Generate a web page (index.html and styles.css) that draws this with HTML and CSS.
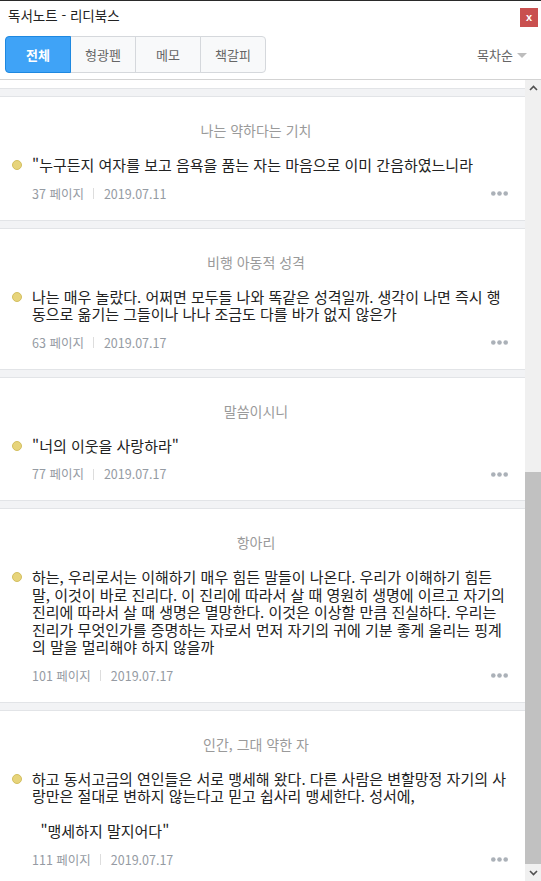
FILE: index.html
```html
<!DOCTYPE html>
<html lang="ko">
<head>
<meta charset="utf-8">
<title>독서노트 - 리디북스</title>
<link rel="stylesheet" href="styles.css">
</head>
<body>
<div class="window">
  <header class="titlebar">
    <span class="title">독서노트 - 리디북스</span>
    <button class="close">x</button>
  </header>
  <nav class="toolbar">
    <div class="tabs">
      <button class="tab active">전체</button>
      <button class="tab">형광펜</button>
      <button class="tab">메모</button>
      <button class="tab last">책갈피</button>
    </div>
    <div class="sort">
      <span>목차순</span>
      <svg class="caret" width="10" height="5" viewBox="0 0 10 5"><path d="M0 0h10L5 5z" fill="#bdbdbd"/></svg>
    </div>
  </nav>
  <main class="body">
    <div class="list">
      <div class="tail"></div>
      <div class="sep"></div>

      <article class="card">
        <h3 class="chapter">나는 약하다는 기치</h3>
        <div class="quote"><span class="dot"></span><p class="text">"누구든지 여자를 보고 음욕을 품는 자는 마음으로 이미 간음하였느니라</p></div>
        <div class="meta"><span>37 페이지</span><span class="bar"></span><span>2019.07.11</span>
          <svg class="more" width="17" height="5" viewBox="0 0 17 5"><circle cx="2.3" cy="2.5" r="2.3"/><circle cx="8.5" cy="2.5" r="2.3"/><circle cx="14.7" cy="2.5" r="2.3"/></svg></div>
      </article>
      <div class="sep"></div>

      <article class="card">
        <h3 class="chapter">비행 아동적 성격</h3>
        <div class="quote"><span class="dot"></span><p class="text">나는 매우 놀랐다. 어쩌면 모두들 나와 똑같은 성격일까. 생각이 나면 즉시 행<br>동으로 옮기는 그들이나 나나 조금도 다를 바가 없지 않은가</p></div>
        <div class="meta"><span>63 페이지</span><span class="bar"></span><span>2019.07.17</span>
          <svg class="more" width="17" height="5" viewBox="0 0 17 5"><circle cx="2.3" cy="2.5" r="2.3"/><circle cx="8.5" cy="2.5" r="2.3"/><circle cx="14.7" cy="2.5" r="2.3"/></svg></div>
      </article>
      <div class="sep"></div>

      <article class="card">
        <h3 class="chapter">말씀이시니</h3>
        <div class="quote"><span class="dot"></span><p class="text">"너의 이웃을 사랑하라"</p></div>
        <div class="meta"><span>77 페이지</span><span class="bar"></span><span>2019.07.17</span>
          <svg class="more" width="17" height="5" viewBox="0 0 17 5"><circle cx="2.3" cy="2.5" r="2.3"/><circle cx="8.5" cy="2.5" r="2.3"/><circle cx="14.7" cy="2.5" r="2.3"/></svg></div>
      </article>
      <div class="sep"></div>

      <article class="card">
        <h3 class="chapter">항아리</h3>
        <div class="quote"><span class="dot"></span><p class="text">하는, 우리로서는 이해하기 매우 힘든 말들이 나온다. 우리가 이해하기 힘든<br>말, 이것이 바로 진리다. 이 진리에 따라서 살 때 영원히 생명에 이르고 자기의<br>진리에 따라서 살 때 생명은 멸망한다. 이것은 이상할 만큼 진실하다. 우리는<br>진리가 무엇인가를 증명하는 자로서 먼저 자기의 귀에 기분 좋게 울리는 핑계<br>의 말을 멀리해야 하지 않을까</p></div>
        <div class="meta"><span>101 페이지</span><span class="bar"></span><span>2019.07.17</span>
          <svg class="more" width="17" height="5" viewBox="0 0 17 5"><circle cx="2.3" cy="2.5" r="2.3"/><circle cx="8.5" cy="2.5" r="2.3"/><circle cx="14.7" cy="2.5" r="2.3"/></svg></div>
      </article>
      <div class="sep"></div>

      <article class="card">
        <h3 class="chapter">인간, 그대 약한 자</h3>
        <div class="quote"><span class="dot"></span><p class="text">하고 동서고금의 연인들은 서로 맹세해 왔다. 다른 사람은 변할망정 자기의 사<br>랑만은 절대로 변하지 않는다고 믿고 쉽사리 맹세한다. 성서에,<br><br>&nbsp;&nbsp;"맹세하지 말지어다"</p></div>
        <div class="meta"><span>111 페이지</span><span class="bar"></span><span>2019.07.17</span>
          <svg class="more" width="17" height="5" viewBox="0 0 17 5"><circle cx="2.3" cy="2.5" r="2.3"/><circle cx="8.5" cy="2.5" r="2.3"/><circle cx="14.7" cy="2.5" r="2.3"/></svg></div>
        <div class="rule"></div>
      </article>
    </div>
    <div class="scrollbar">
      <div class="sb-btn up"><svg width="9" height="6" viewBox="0 0 9 6"><path d="M1 5L4.5 1.5L8 5" fill="none" stroke="#505050" stroke-width="1.6"/></svg></div>
      <div class="sb-track"><div class="sb-thumb"></div></div>
      <div class="sb-btn down"><svg width="9" height="6" viewBox="0 0 9 6"><path d="M1 1L4.5 4.5L8 1" fill="none" stroke="#505050" stroke-width="1.6"/></svg></div>
    </div>
  </main>
</div>
</body>
</html>
```

FILE: styles.css
```css
* { box-sizing: border-box; margin: 0; padding: 0; }
html, body { width: 541px; height: 881px; overflow: hidden; background: #fff; }
body { font-family: "Noto Sans CJK KR", "Noto Sans", sans-serif; color: #333; }

.window { display: flex; flex-direction: column; height: 881px; border-top: 1px solid #2a2a2a; }

.titlebar { display: flex; justify-content: space-between; align-items: flex-start; height: 29px; padding: 0 3px 0 8px; }
.title { font-size: 13.5px; line-height: 16px; margin-top: 6px; color: #222; }
.close { margin-top: 7px; width: 18px; height: 19px; border: none; background: #c9504f; color: #fff; font-family: "Liberation Sans", sans-serif; font-size: 11px; font-weight: bold; line-height: 19px; }

.toolbar { display: flex; justify-content: space-between; align-items: center; padding: 6px 14px 6px 5px; border-bottom: 1px solid #d3d3d3; }
.tabs { display: flex; height: 37px; }
.tab { width: 66px; height: 37px; margin-left: -1px; border: 1px solid #d5d8dc; background: #f8f9fa; color: #666; font-family: inherit; font-size: 13px; }
.tab:first-child { margin-left: 0; border-radius: 4px 0 0 4px; }
.tab.last { border-radius: 0 4px 4px 0; }
.tab.active { background: #3fa3f7; border-color: #1e88e0; color: #fff; font-weight: bold; position: relative; z-index: 1; }
.sort { display: flex; align-items: center; gap: 4px; font-size: 13px; color: #666; }
.caret { margin-top: 1px; }

.body { flex: 1; display: flex; min-height: 0; }
.list { flex: 1; overflow: hidden; background: #fff; }
.tail { height: 8px; }
.sep { height: 9px; background: #f2f3f5; border-top: 1px solid #e2e4e7; border-bottom: 1px solid #e2e4e7; }

.card { padding: 24px 17px 18px 32px; background: #fff; }
.chapter { font-size: 14px; line-height: 18px; font-weight: normal; color: #9a9a9a; text-align: center; padding-right: 28px; }
.quote { display: flex; align-items: flex-start; gap: 10px; margin: 17px 0 0 -20px; }
.dot { flex: none; width: 10px; height: 10px; margin-top: 4px; border-radius: 50%; background: #e7d47b; border: 1px solid #d3bf60; }
.text { font-size: 15px; line-height: 17.5px; color: #222; white-space: nowrap; }
.meta { display: flex; align-items: center; margin-top: 12px; font-size: 12.5px; line-height: 16px; color: #959ba3; }
.bar { width: 1px; height: 11px; background: #dddddd; margin: 0 10px 0 9px; }
.more { margin-left: auto; fill: #abb1b8; }
.rule { margin: 13px -4px 0 0; border-top: 1px solid #dadada; }

.scrollbar { width: 16px; display: flex; flex-direction: column; background: #f0f0f0; }
.sb-btn { display: flex; align-items: center; justify-content: center; }
.sb-btn.up { height: 16px; }
.sb-btn.down { height: 17px; }
.sb-track { flex: 1; display: flex; flex-direction: column; justify-content: flex-end; }
.sb-thumb { height: 392px; background: #c1c1c1; }
```
